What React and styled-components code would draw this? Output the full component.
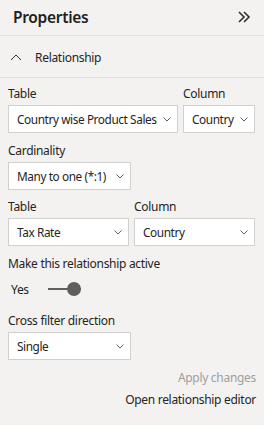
import React from "react";
import styled, { createGlobalStyle } from "styled-components";

const Global = createGlobalStyle`
  html, body { margin: 0; padding: 0; background: #f3f2f1; }
  body { font-family: "Noto Sans", "Open Sans", sans-serif; color: #252423; }
  * { box-sizing: border-box; }
`;

const Panel = styled.div`
  width: 264px;
  height: 425px;
  background: #f3f2f1;
  display: flex;
  flex-direction: column;
  overflow: hidden;
`;

const Header = styled.div`
  height: 36px;
  display: flex;
  align-items: center;
  justify-content: space-between;
  padding: 0 12px 2px 13px;
  border-bottom: 1px solid #e1dfdd;
`;

const Title = styled.div`
  font-size: 15.5px;
  font-weight: 600;
  letter-spacing: -0.3px;
  color: #201f1e;
`;

const IconBtn = styled.div`
  width: 16px;
  height: 16px;
  display: flex;
  align-items: center;
  justify-content: center;
  color: #323130;
`;

const SectionHeader = styled.div`
  height: 42px;
  display: flex;
  align-items: center;
  gap: 13px;
  padding: 1px 10px 0;
  border-bottom: 1px solid #e1dfdd;
  font-size: 12px;
  letter-spacing: -0.3px;
  color: #252423;
`;

const Body = styled.div`
  display: flex;
  flex-direction: column;
  padding: 8px 8px 0 8px;
  font-size: 12px;
  letter-spacing: -0.3px;
`;

const Row = styled.div`
  display: flex;
  gap: 5px;
  margin-top: ${(p) => p.$mt || 0}px;
`;

const Field = styled.div`
  display: flex;
  flex-direction: column;
  width: ${(p) => p.$w}px;
  margin-top: ${(p) => p.$mt || 0}px;
`;

const Label = styled.div`
  line-height: 16px;
  color: #252423;
  margin-bottom: ${(p) => (p.$mb != null ? p.$mb : 3)}px;
  margin-top: ${(p) => p.$mt || 0}px;
`;

const Select = styled.div`
  height: 28px;
  background: #fff;
  border: 1px solid #d2d0ce;
  display: flex;
  align-items: center;
  gap: 4px;
  padding: 0 5px 0 8px;
  font-size: 11.8px;
  letter-spacing: -0.4px;
  color: #252423;
  white-space: nowrap;
  overflow: hidden;
`;

const SelectText = styled.span`
  flex: 1 1 auto;
  overflow: hidden;
`;

const Toggle = styled.div`
  display: flex;
  align-items: center;
  gap: 19px;
  height: 22px;
  padding-left: 3px;
  margin-top: 6px;
`;

const Track = styled.div`
  position: relative;
  width: 33px;
  height: 2px;
  background: #605e5c;
`;

const Knob = styled.div`
  position: absolute;
  right: 0;
  top: -6px;
  width: 14px;
  height: 14px;
  border-radius: 50%;
  background: #605e5c;
`;

const Actions = styled.div`
  display: flex;
  flex-direction: column;
  align-items: flex-end;
  gap: 6px;
  margin-top: 10px;
`;

const Action = styled.div`
  line-height: 16px;
  color: ${(p) => (p.$disabled ? "#a19f9d" : "#252423")};
`;

const Chevron = () => (
  <svg width="10" height="10" viewBox="0 0 10 10" style={{ flex: "none" }}>
    <path d="M1.5 3.5 L5 7 L8.5 3.5" fill="none" stroke="#605e5c" strokeWidth="1" />
  </svg>
);

const Dropdown = ({ children }) => (
  <Select>
    <SelectText>{children}</SelectText>
    <Chevron />
  </Select>
);

export default function App() {
  return (
    <>
      <Global />
      <Panel>
        <Header>
          <Title>Properties</Title>
          <IconBtn>
            <svg width="14" height="12" viewBox="0 0 14 12">
              <path d="M2 1 L7 6 L2 11 M7 1 L12 6 L7 11" fill="none" stroke="#323130" strokeWidth="1.6" />
            </svg>
          </IconBtn>
        </Header>
        <SectionHeader>
          <svg width="12" height="8" viewBox="0 0 12 8">
            <path d="M1 7 L6 2 L11 7" fill="none" stroke="#323130" strokeWidth="1" />
          </svg>
          <span>Relationship</span>
        </SectionHeader>
        <Body>
          <Row>
            <Field $w={170}>
              <Label>Table</Label>
              <Dropdown>Country wise Product Sales</Dropdown>
            </Field>
            <Field $w={72}>
              <Label>Column</Label>
              <Dropdown>Country</Dropdown>
            </Field>
          </Row>
          <Field $w={123} $mt={10}>
            <Label>Cardinality</Label>
            <Dropdown>Many to one (*:1)</Dropdown>
          </Field>
          <Row $mt={9}>
            <Field $w={121}>
              <Label>Table</Label>
              <Dropdown>Tax Rate</Dropdown>
            </Field>
            <Field $w={121}>
              <Label>Column</Label>
              <Dropdown>Country</Dropdown>
            </Field>
          </Row>
          <Label $mt={10} $mb={0}>Make this relationship active</Label>
          <Toggle>
            <span>Yes</span>
            <Track>
              <Knob />
            </Track>
          </Toggle>
          <Field $w={123} $mt={13}>
            <Label>Cross filter direction</Label>
            <Dropdown>Single</Dropdown>
          </Field>
          <Actions>
            <Action $disabled>Apply changes</Action>
            <Action>Open relationship editor</Action>
          </Actions>
        </Body>
      </Panel>
    </>
  );
}
